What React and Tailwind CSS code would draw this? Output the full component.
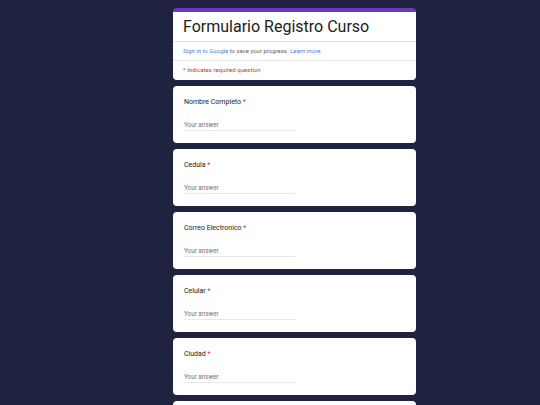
const questions = ["Nombre Completo", "Cedula", "Correo Electronico", "Celular", "Ciudad"]

const QuestionCard = ({ label }) => {
    return (
        <div className="bg-white rounded-[4px] h-[57px] shrink-0 px-[11px] pt-[11px]">
            {label && (
                <p className="text-[7px] text-[#202124] leading-[10px]">
                    {label} <span className="text-[#d93025]">*</span>
                </p>
            )}
            {label && (
                <div className="mt-[14px] w-[111px] border-b border-[#e8e8ec] pb-[1px]">
                    <p className="text-[6.3px] text-[#70757a] leading-[8px]">Your answer</p>
                </div>
            )}
        </div>
    )
}

export default function App() {
    return (
        <div className="w-[540px] h-[405px] overflow-hidden bg-[#1f2340] font-['Roboto',sans-serif]">
            <div className="ml-[173px] w-[243px] pt-[8px] flex flex-col gap-[6px]">
                <div className="bg-white rounded-[4px] overflow-hidden border-t-[4px] border-[#673ab7] h-[72px]">
                    <div className="px-[10px] pt-[5px] pb-[4px] border-b border-[#e3e3e6]">
                        <h1 className="text-[16px] text-[#202124] leading-[20px]">Formulario Registro Curso</h1>
                    </div>
                    <div className="px-[10px] py-[4px] border-b border-[#e3e3e6]">
                        <p className="text-[6px] leading-[10px] text-[#5f6368]">
                            <span className="text-[#4285f4]">Sign in to Google</span> to save your progress. <span className="text-[#4285f4]">Learn more</span>
                        </p>
                    </div>
                    <div className="px-[10px] py-[4px]">
                        <p className="text-[6.1px] leading-[10px] text-[#d93025]">* Indicates required question</p>
                    </div>
                </div>
                {questions.map((q, index) => (
                    <QuestionCard label={q} key={index} />
                ))}
                <QuestionCard label="" />
            </div>
        </div>
    )
}
